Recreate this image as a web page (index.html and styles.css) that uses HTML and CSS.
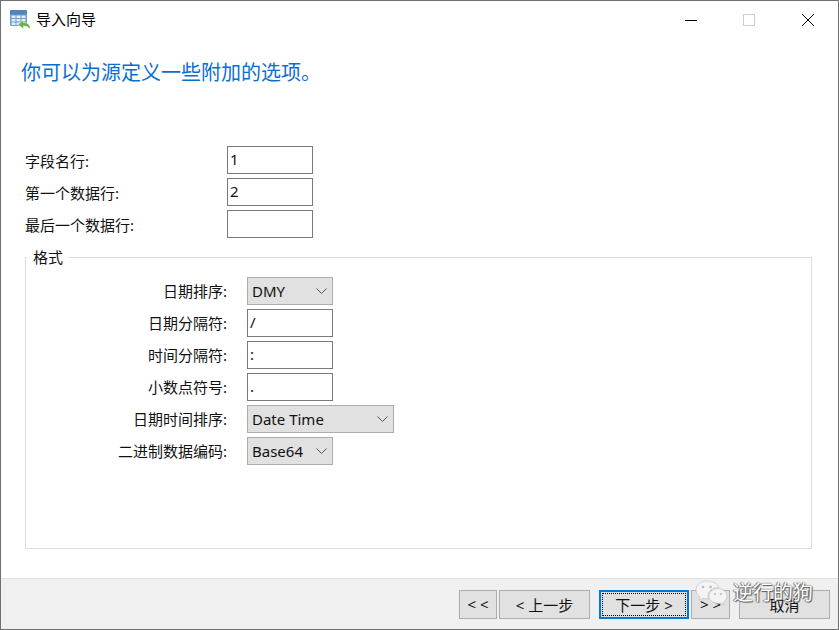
FILE: index.html
```html
<!DOCTYPE html>
<html lang="zh">
<head>
<meta charset="utf-8">
<title>导入向导</title>
<link rel="stylesheet" href="styles.css">
</head>
<body>
<div class="window">
  <header class="titlebar">
    <svg class="app-icon" width="21" height="20" viewBox="0 0 21 20">
      <rect x="0" y="0" width="17" height="16" rx="1.500" fill="#6a9fd0"/>
      <rect x="0" y="0" width="17" height="4.500" rx="1" fill="#4f86bd"/>
      <path d="M1.500 5.500h4V8h-4zM6.500 5.500h4V8h-4zM11.500 5.500h4V8h-4zM1.500 9h4v2.500h-4zM6.500 9h4v2.500h-4zM11.500 9h4v2.500h-4zM1.500 12.500h4v2.500h-4zM6.500 12.500h4v2.500h-4z" fill="#e3eef8"/>
      <path d="M20.500 19.500c0-4.500-3-7-7-7V10l-5.500 4.500 5.500 4.500v-3c3 0 5 1 7 3.500z" fill="#6cb33f" stroke="#fff" stroke-width=".5"/>
    </svg>
    <span class="title">导入向导</span>
    <div class="caption-buttons">
      <svg width="12" height="12" viewBox="0 0 12 12"><path d="M0 6.500h12" stroke="#000" fill="none"/></svg>
      <svg width="12" height="12" viewBox="0 0 12 12"><rect x=".5" y=".5" width="11" height="11" stroke="#ccc" fill="none"/></svg>
      <svg width="14" height="14" viewBox="0 0 14 14"><path d="M1 1l12 12M13 1L1 13" stroke="#000" fill="none"/></svg>
    </div>
  </header>

  <main class="content">
    <h1 class="heading">你可以为源定义一些附加的选项。</h1>

    <div class="rows">
      <div class="row"><label class="row-label">字段名行:</label><input class="field" value="1"></div>
      <div class="row"><label class="row-label">第一个数据行:</label><input class="field" value="2"></div>
      <div class="row"><label class="row-label">最后一个数据行:</label><input class="field" value=""></div>
    </div>

    <fieldset class="group">
      <legend class="legend">格式</legend>
      <div class="format-row"><label class="format-label">日期排序:</label>
        <div class="combo"><span>DMY</span><svg class="chev" width="11" height="6" viewBox="0 0 11 6"><path d="M.5.500l5 5 5-5" stroke="#555" fill="none"/></svg></div></div>
      <div class="format-row"><label class="format-label">日期分隔符:</label><input class="field field-fmt" value="/"></div>
      <div class="format-row"><label class="format-label">时间分隔符:</label><input class="field field-fmt" value=":"></div>
      <div class="format-row"><label class="format-label">小数点符号:</label><input class="field field-fmt" value="."></div>
      <div class="format-row"><label class="format-label">日期时间排序:</label>
        <div class="combo combo-wide"><span>Date Time</span><svg class="chev" width="11" height="6" viewBox="0 0 11 6"><path d="M.5.500l5 5 5-5" stroke="#555" fill="none"/></svg></div></div>
      <div class="format-row"><label class="format-label">二进制数据编码:</label>
        <div class="combo"><span>Base64</span><svg class="chev" width="11" height="6" viewBox="0 0 11 6"><path d="M.5.500l5 5 5-5" stroke="#555" fill="none"/></svg></div></div>
    </fieldset>
  </main>

  <footer class="footer">
    <button class="btn btn-first">&lt; &lt;</button>
    <button class="btn btn-prev">&lt; 上一步</button>
    <button class="btn btn-next"><span class="focus-ring">下一步 &gt;</span></button>
    <button class="btn btn-last">&gt; &gt;</button>
    <button class="btn btn-cancel">取消</button>
  </footer>

  <div class="watermark">
    <svg width="33" height="27" viewBox="0 0 33 27">
      <path d="M12 1C5.900 1 1 5 1 10c0 2.800 1.500 5.300 4 7l-1 3.500 4-2.200c1.300.4 2.600.6 4 .6.500 0 1 0 1.400-.1-.3-.9-.4-1.800-.4-2.800 0-4.800 4.500-8.500 10-8.500h.8C22.600 3.700 17.800 1 12 1z" fill="#f4f4f4" stroke="#bbb" stroke-width=".6"/>
      <path d="M32 16c0-4.200-4.100-7.500-9-7.500S14 11.800 14 16s4.100 7.500 9 7.500c1 0 2-.1 3-.4l3.200 1.800-.8-2.900c2.200-1.400 3.600-3.600 3.600-6z" fill="#f4f4f4" stroke="#bbb" stroke-width=".6"/>
      <circle cx="8" cy="7" r="1.300" fill="#bbb"/><circle cx="15.500" cy="7" r="1.300" fill="#bbb"/>
      <circle cx="20" cy="14" r="1.100" fill="#bbb"/><circle cx="26" cy="14" r="1.100" fill="#bbb"/>
    </svg>
    <span class="wm-text">逆行的狗</span>
  </div>
</div>
</body>
</html>
```
FILE: styles.css
```css
* { box-sizing: border-box; }
html, body { margin: 0; padding: 0; }
body {
  width: 839px;
  height: 630px;
  overflow: hidden;
  background: #fff;
  font-family: "Noto Sans", "Noto Sans CJK SC", sans-serif;
  font-size: 15px;
  color: #111;
}
.window {
  position: relative;
  width: 839px;
  height: 630px;
  display: flex;
  flex-direction: column;
  border: 1px solid #707070;
  background: #fff;
}
.titlebar {
  height: 38px;
  flex: none;
  display: flex;
  align-items: center;
  padding-left: 9px;
}
.app-icon { flex: none; margin-top: -1px; }
.title {
  margin-left: 5px;
  margin-top: -3px;
  font-size: 15px;
  color: #000;
}
.caption-buttons {
  margin-left: auto;
  display: flex;
  align-items: center;
  gap: 46px;
  padding-right: 23px;
  margin-top: -1px;
}
.caption-buttons svg { display: block; }
.content {
  flex: 1;
  min-height: 0;
  padding: 0 26px 0 24px;
  display: flex;
  flex-direction: column;
}
.heading {
  margin: 19px 0 0 -4px;
  height: 30px;
  line-height: 30px;
  font-size: 20px;
  font-weight: 400;
  color: #0a6ed1;
}
.rows {
  margin-top: 58px;
  display: flex;
  flex-direction: column;
  gap: 4px;
}
.row {
  display: flex;
  align-items: center;
  height: 28px;
}
.row-label {
  width: 202px;
  font-size: 15px;
}
.field {
  width: 86px;
  height: 28px;
  border: 1px solid #7a7a7a;
  border-radius: 0;
  padding: 0 2px 2px;
  margin: 0;
  outline: none;
  background: #fff;
  font: inherit;
  font-size: 15px;
  color: #111;
}
.group {
  flex: none;
  height: 302px;
  margin: 9px 0 0;
  padding: 10px 0 0;
  border: 1px solid #dcdcdc;
  display: block;
  min-width: 0;
}
.legend {
  margin-left: 1px;
  padding: 0 6px;
  font-size: 15px;
  line-height: 20px;
}
.format-row {
  display: flex;
  align-items: center;
  height: 28px;
  margin-bottom: 4px;
}
.format-label {
  width: 201px;
  margin-bottom: 2px;
  text-align: right;
  font-size: 15px;
}
.field-fmt { margin-left: 20px; }
.combo {
  width: 86px;
  height: 28px;
  margin-left: 20px;
  padding: 0 5px 0 4px;
  display: flex;
  align-items: center;
  justify-content: space-between;
  background: #e1e1e1;
  border: 1px solid #adadad;
  font-size: 15px;
  color: #111;
}
.combo-wide { width: 147px; }
.chev { flex: none; }
.footer {
  flex: none;
  height: 51px;
  display: flex;
  align-items: center;
  padding: 0 8px 0 458px;
  background: #f0f0f0;
  border-top: 1px solid #dfdfdf;
}
.btn {
  height: 29px;
  margin: 0;
  padding: 0;
  background: #e1e1e1;
  border: 1px solid #adadad;
  font: inherit;
  font-size: 15px;
  color: #111;
  flex: none;
}
.btn-first { width: 38px; }
.btn-prev { width: 91px; margin-left: 2px; }
.btn-next {
  width: 90px;
  margin-left: 9px;
  padding: 1px;
  border: 2px solid #0078d7;
}
.focus-ring {
  display: flex;
  align-items: center;
  justify-content: center;
  height: 100%;
  border: 1px dotted #000;
}
.btn-last { width: 39px; margin-left: 2px; }
.btn-cancel { width: 91px; margin-left: 9px; }
.watermark {
  position: absolute;
  left: 694px;
  top: 579px;
  display: flex;
  align-items: flex-start;
  gap: 5px;
}
.wm-text {
  margin-top: 0;
  font-size: 20px;
  line-height: 26px;
  color: #fff;
  text-shadow: 0 0 1px #555, 1px 1px 1px #555, -1px 0 1px #777;
}
```
